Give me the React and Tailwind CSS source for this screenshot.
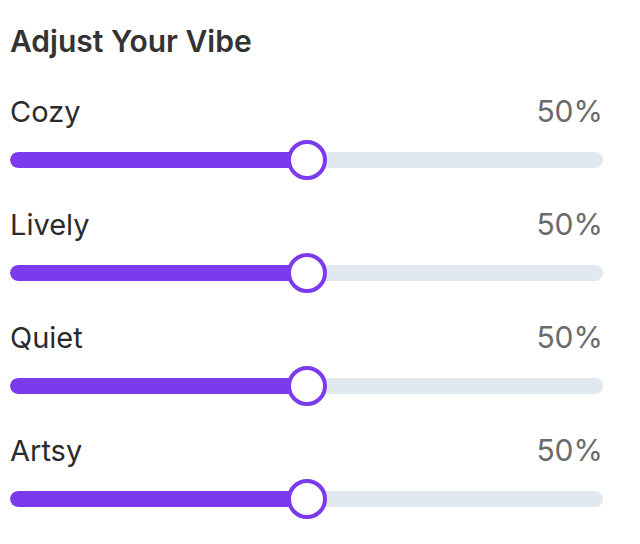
export default function App() {
  const vibes = ["Cozy", "Lively", "Quiet", "Artsy"];
  return (
    <div
      className="w-[640px] h-[544px] bg-white pl-[10px] pr-[37px] pt-[23px]"
      style={{ fontFamily: "Inter, 'Noto Sans', sans-serif" }}
    >
      <h2 className="text-[30px] leading-[36px] font-semibold text-[#333333]">
        Adjust Your Vibe
      </h2>
      <div className="mt-[36px] flex flex-col gap-[28px]">
        {vibes.map((v) => (
          <div key={v} className="flex flex-col gap-[12px]">
            <div className="flex justify-between items-baseline text-[29px] leading-[32px]">
              <span className="text-[#2b2b2b]">{v}</span>
              <span className="text-[#6b6b6b] text-[30px]">50%</span>
            </div>
            <div className="relative h-[40px] flex items-center">
              <div className="w-full h-[16px] rounded-full bg-[#e2e8f0] overflow-hidden">
                <div className="h-full bg-[#7c3aed] rounded-full" style={{ width: "50%" }} />
              </div>
              <div className="absolute left-1/2 top-0 -translate-x-1/2 w-[40px] h-[40px] rounded-full bg-white border-[4px] border-[#7c3aed]" />
            </div>
          </div>
        ))}
      </div>
    </div>
  );
}
